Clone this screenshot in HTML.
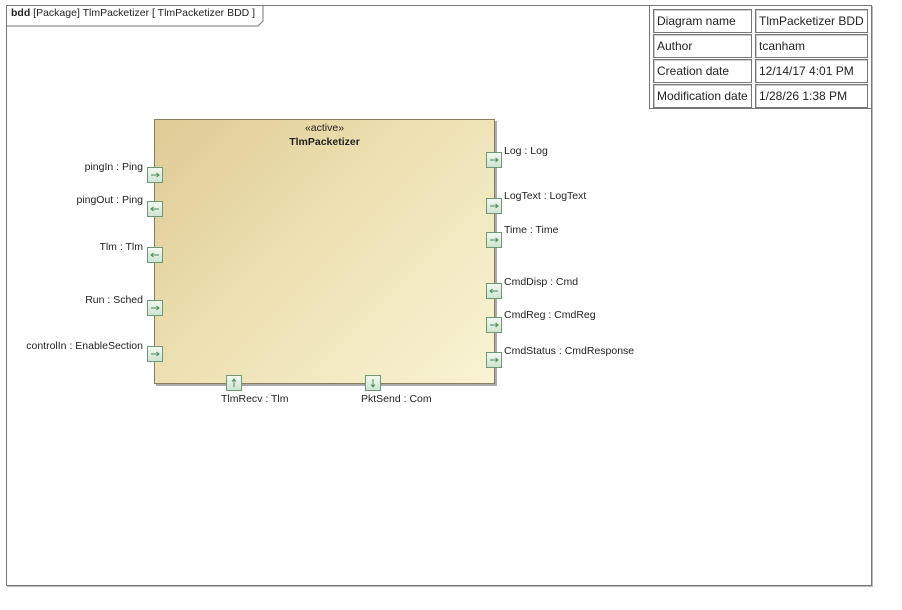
<!DOCTYPE html>
<html><head><meta charset="utf-8"><style>
*{margin:0;padding:0;box-sizing:border-box}
body{width:902px;height:610px;background:#fff;position:relative;overflow:hidden;font-family:"Liberation Sans",Arial,sans-serif;font-size:10.5px;color:#222}
.a{position:absolute}
.frame{left:6px;top:5px;width:866px;height:581px;border:1px solid #777;box-shadow:1px 1px 0 #bbb}
.title{left:11px;top:7px;font-size:10.5px;white-space:nowrap}
.tbl{left:649px;top:5px;width:223px;height:104px;border:1px solid #777;background:#fff}
.c{position:absolute;border:1px solid #777;height:24px;font-size:12px;line-height:22px;padding-left:3px;white-space:nowrap;box-shadow:inset 1px 1px 0 #ccc}
.blk{left:154px;top:119px;width:341px;height:265px;border:1px solid #8a7e60;background:linear-gradient(135deg,#dfcb95 0%,#ede0b2 45%,#f9f4d4 100%);box-shadow:2px 2px 0 #aaa}
.p{position:absolute;width:16px;height:16px;border:1px solid #6c9a74;background:linear-gradient(#f2f8f2,#cfe4d2)}
.p svg{position:absolute;left:0;top:0}
.l{position:absolute;white-space:nowrap;font-size:10.5px}
.r{text-align:right}
</style></head><body>
<svg width="0" height="0" style="position:absolute"><defs>
<g id="ar"><path d="M3 7 H11 M8.5 5 L11 7 L8.5 9" fill="none" stroke="#4a8a55" stroke-width="1"/></g>
<g id="al"><path d="M11 7 H3 M5.5 5 L3 7 L5.5 9" fill="none" stroke="#4a8a55" stroke-width="1"/></g>
<g id="au"><path d="M7 11 V3 M5 5.5 L7 3 L9 5.5" fill="none" stroke="#4a8a55" stroke-width="1"/></g>
<g id="ad"><path d="M7 3 V11 M5 8.5 L7 11 L9 8.5" fill="none" stroke="#4a8a55" stroke-width="1"/></g>
</defs></svg>
<div class="a frame"></div>
<svg class="a" style="left:6px;top:5px" width="262" height="24"><path d="M0 21 H252 L257 16 V0" fill="none" stroke="#777" stroke-width="1"/></svg>
<div class="a title"><b>bdd</b> [Package] TlmPacketizer [ TlmPacketizer BDD ]</div>
<div class="a tbl">
<div class="c" style="left:3px;top:3px;width:99px">Diagram name</div>
<div class="c" style="left:105px;top:3px;width:113px">TlmPacketizer BDD</div>
<div class="c" style="left:3px;top:28px;width:99px">Author</div>
<div class="c" style="left:105px;top:28px;width:113px">tcanham</div>
<div class="c" style="left:3px;top:53px;width:99px">Creation date</div>
<div class="c" style="left:105px;top:53px;width:113px">12/14/17 4:01 PM</div>
<div class="c" style="left:3px;top:78px;width:99px">Modification date</div>
<div class="c" style="left:105px;top:78px;width:113px">1/28/26 1:38 PM</div>
</div>
<div class="a blk"></div>
<div class="l" style="left:154px;width:341px;top:122px;text-align:center">«active»</div>
<div class="l" style="left:154px;width:341px;top:136px;text-align:center;font-weight:bold">TlmPacketizer</div>

<div class="p" style="left:147px;top:167px"><svg width="14" height="14"><use href="#ar"/></svg></div><div class="l r" style="right:759px;top:161px">pingIn : Ping</div>
<div class="p" style="left:147px;top:201px"><svg width="14" height="14"><use href="#al"/></svg></div><div class="l r" style="right:759px;top:194px">pingOut : Ping</div>
<div class="p" style="left:147px;top:247px"><svg width="14" height="14"><use href="#al"/></svg></div><div class="l r" style="right:759px;top:241px">Tlm : Tlm</div>
<div class="p" style="left:147px;top:300px"><svg width="14" height="14"><use href="#ar"/></svg></div><div class="l r" style="right:759px;top:294px">Run : Sched</div>
<div class="p" style="left:147px;top:346px"><svg width="14" height="14"><use href="#ar"/></svg></div><div class="l r" style="right:759px;top:340px">controlIn : EnableSection</div>

<div class="p" style="left:486px;top:152px"><svg width="14" height="14"><use href="#ar"/></svg></div><div class="l" style="left:504px;top:145px">Log : Log</div>
<div class="p" style="left:486px;top:198px"><svg width="14" height="14"><use href="#ar"/></svg></div><div class="l" style="left:504px;top:190px">LogText : LogText</div>
<div class="p" style="left:486px;top:232px"><svg width="14" height="14"><use href="#ar"/></svg></div><div class="l" style="left:504px;top:224px">Time : Time</div>
<div class="p" style="left:486px;top:283px"><svg width="14" height="14"><use href="#al"/></svg></div><div class="l" style="left:504px;top:276px">CmdDisp : Cmd</div>
<div class="p" style="left:486px;top:317px"><svg width="14" height="14"><use href="#ar"/></svg></div><div class="l" style="left:504px;top:309px">CmdReg : CmdReg</div>
<div class="p" style="left:486px;top:352px"><svg width="14" height="14"><use href="#ar"/></svg></div><div class="l" style="left:504px;top:345px">CmdStatus : CmdResponse</div>

<div class="p" style="left:226px;top:375px"><svg width="14" height="14"><use href="#au"/></svg></div><div class="l" style="left:221px;top:393px">TlmRecv : Tlm</div>
<div class="p" style="left:365px;top:375px"><svg width="14" height="14"><use href="#ad"/></svg></div><div class="l" style="left:361px;top:393px">PktSend : Com</div>
</body></html>
